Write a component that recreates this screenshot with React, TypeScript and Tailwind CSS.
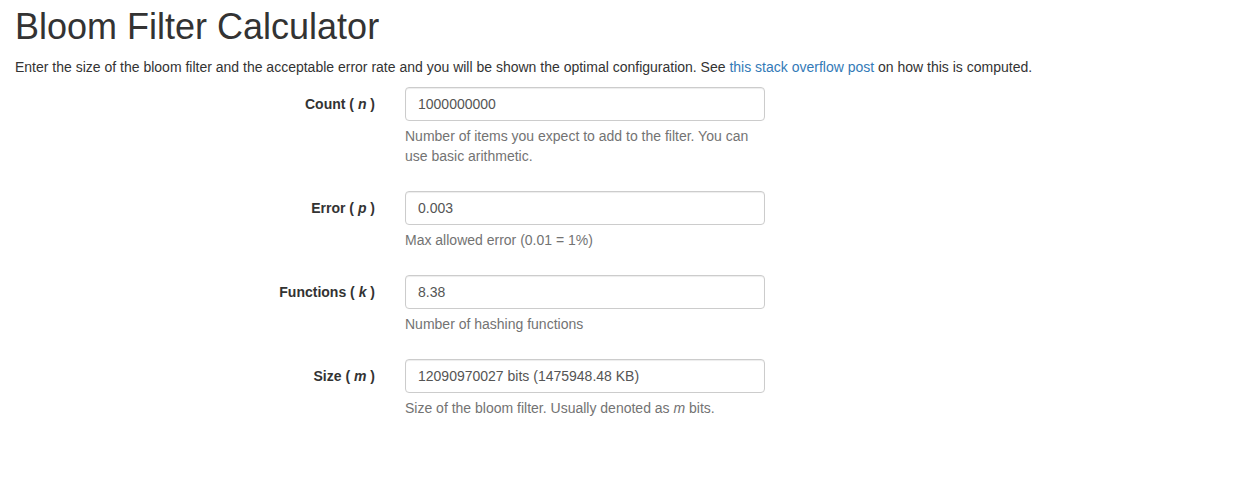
import React from "react";

const rows = [
  {
    label: "Count",
    sym: "n",
    value: "1000000000",
    help: <>Number of items you expect to add to the filter. You can use basic arithmetic.</>,
  },
  { label: "Error", sym: "p", value: "0.003", help: <>Max allowed error (0.01 = 1%)</> },
  { label: "Functions", sym: "k", value: "8.38", help: <>Number of hashing functions</> },
  {
    label: "Size",
    sym: "m",
    value: "12090970027 bits (1475948.48 KB)",
    help: (
      <>
        Size of the bloom filter. Usually denoted as <i>m</i> bits.
      </>
    ),
  },
];

export default function App() {
  return (
    <div className="px-[15px] text-[14px] leading-5 text-[#333] font-['Liberation_Sans',Arial,sans-serif] bg-white min-h-[495px]">
      <h1 className="text-[36px] leading-[1.1] mt-[7px] mb-[10px]">Bloom Filter Calculator</h1>
      <p className="mb-[10px]">
        Enter the size of the bloom filter and the acceptable error rate and you will be shown the optimal
        configuration. See{" "}
        <a href="#" className="text-[#337ab7]">
          this stack overflow post
        </a>{" "}
        on how this is computed.
      </p>
      <div>
        {rows.map((r) => (
          <div key={r.label} className="flex mb-[15px]">
            <label className="w-[360px] text-right font-bold pt-[7px]">
              {r.label} ( <i>{r.sym}</i> )
            </label>
            <div className="ml-[30px] w-[360px]">
              <input
                readOnly
                value={r.value}
                className="block w-full h-[34px] px-3 py-[6px] text-[14px] text-[#555] border border-[#ccc] rounded-[4px] shadow-[inset_0_1px_1px_rgba(0,0,0,0.075)] outline-none"
              />
              <p className="mt-[5px] mb-[10px] text-[#737373]">{r.help}</p>
            </div>
          </div>
        ))}
      </div>
    </div>
  );
}
